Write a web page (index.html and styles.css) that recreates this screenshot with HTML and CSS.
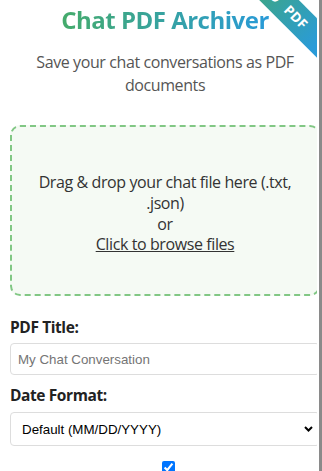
FILE: index.html
```html
<!DOCTYPE html>
<html lang="en">
<head>
<meta charset="utf-8">
<title>Chat PDF Archiver</title>
<link rel="stylesheet" href="styles.css">
</head>
<body>
<div class="page">
  <div class="clip">
    <div class="ribbon"><span>TO PDF</span></div>
    <div class="container">
      <h1 class="title">Chat PDF Archiver</h1>
      <p class="subtitle">Save your chat conversations as PDF<br>documents</p>
      <div class="dropzone">
        <p class="drop-text">Drag &amp; drop your chat file here (.txt,<br>.json)<br>or<br><span class="browse">Click to browse files</span></p>
      </div>
      <div class="field">
        <label class="label" for="title">PDF Title:</label>
        <input class="input" id="title" type="text" placeholder="My Chat Conversation">
      </div>
      <div class="field">
        <label class="label" for="fmt">Date Format:</label>
        <select class="select" id="fmt">
          <option>Default (MM/DD/YYYY)</option>
        </select>
      </div>
      <div class="check-row">
        <input class="check" type="checkbox" checked>
      </div>
    </div>
  </div>
</div>
</body>
</html>
```
FILE: styles.css
```css
html {
  background: #8a8a8a;
}
body {
  margin: 0;
  font-family: "Open Sans", "Noto Sans", sans-serif;
  color: #333;
}
.page {
  width: 319px;
  min-height: 100vh;
  background: #fff;
}
.clip {
  position: relative;
  width: 317px;
  min-height: 100vh;
  overflow: hidden;
}
.ribbon {
  position: absolute;
  left: 225px;
  top: 2px;
  width: 140px;
  height: 28px;
  transform: rotate(45deg);
  background: linear-gradient(90deg, #43a96a, #2a9bd8 75%);
  color: #fff;
  font-weight: 700;
  font-size: 13.5px;
  line-height: 28px;
  text-align: left;
  padding-left: 29px;
  box-sizing: border-box;
  word-spacing: 6px;
  letter-spacing: 0.3px;
}
.container {
  width: 310px;
  margin-left: 10px;
}
.title {
  margin: 4px 0 0;
  font-size: 24px;
  line-height: 32px;
  font-weight: 700;
  letter-spacing: -0.5px;
  text-align: center;
  background: linear-gradient(90deg, #4caf50, #2196f3);
  -webkit-background-clip: text;
  background-clip: text;
  color: transparent;
}
.subtitle {
  margin: 15px 0 0;
  font-size: 16px;
  line-height: 23px;
  letter-spacing: -0.4px;
  color: #555;
  text-align: center;
}
.dropzone {
  margin-top: 28px;
  border: 2px dashed #81c784;
  border-radius: 10px;
  background: #f5faf4;
  padding: 45px 10px 39px;
  text-align: center;
}
.drop-text {
  margin: 0;
  font-size: 16px;
  line-height: 20.8px;
  letter-spacing: -0.4px;
  color: #333;
}
.browse {
  text-decoration: underline;
}
.field {
  display: flex;
  flex-direction: column;
}
.field + .field {
  margin-top: 10px;
}
.dropzone + .field {
  margin-top: 21px;
}
.label {
  font-size: 15.5px;
  line-height: 21px;
  font-weight: 700;
  letter-spacing: -0.4px;
  color: #222;
  margin-bottom: 5px;
}
.input {
  box-sizing: border-box;
  height: 32px;
  width: 100%;
  margin: 0;
  padding: 0 7px;
  border: 1px solid #ddd;
  border-radius: 4px;
  font-family: "Liberation Sans", Arial, sans-serif;
  font-size: 13.33px;
  color: #222;
}
.input::placeholder {
  color: #757575;
}
.select {
  box-sizing: border-box;
  height: 34px;
  width: 100%;
  margin: 1px 0 0;
  padding: 0 11px;
  border: 1px solid #ddd;
  border-radius: 4px;
  font-family: "Liberation Sans", Arial, sans-serif;
  font-size: 13.33px;
  color: #000;
  background: #fff url("data:image/svg+xml;utf8,<svg xmlns='http://www.w3.org/2000/svg' width='9' height='6' viewBox='0 0 9 6'><path d='M1 1 L4.5 4.5 L8 1' fill='none' stroke='black' stroke-width='2'/></svg>") no-repeat right 6px center;
  -webkit-appearance: none;
  appearance: none;
}
.check-row {
  margin-top: 11px;
  text-align: center;
  padding-left: 7px;
}
.check {
  margin: 3px;
  width: 13px;
  height: 13px;
}
```
